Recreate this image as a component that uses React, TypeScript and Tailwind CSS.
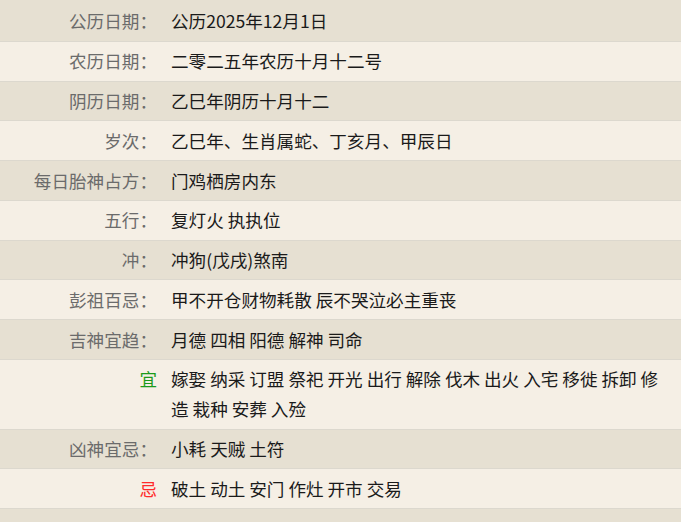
const rows: { label: string; value: string; tone?: "yi" | "ji" }[] = [
  { label: "公历日期：", value: "公历2025年12月1日" },
  { label: "农历日期：", value: "二零二五年农历十月十二号" },
  { label: "阴历日期：", value: "乙巳年阴历十月十二" },
  { label: "岁次：", value: "乙巳年、生肖属蛇、丁亥月、甲辰日" },
  { label: "每日胎神占方：", value: "门鸡栖房内东" },
  { label: "五行：", value: "复灯火 执执位" },
  { label: "冲：", value: "冲狗(戊戌)煞南" },
  { label: "彭祖百忌：", value: "甲不开仓财物耗散 辰不哭泣必主重丧" },
  { label: "吉神宜趋：", value: "月德 四相 阳德 解神 司命" },
  {
    label: "宜",
    value: "嫁娶 纳采 订盟 祭祀 开光 出行 解除 伐木 出火 入宅 移徙 拆卸 修造 栽种 安葬 入殓",
    tone: "yi",
  },
  { label: "凶神宜忌：", value: "小耗 天贼 土符" },
  { label: "忌", value: "破土 动土 安门 作灶 开市 交易", tone: "ji" },
  { label: "", value: "" },
];

export default function App() {
  return (
    <div
      className="w-[681px] h-[522px] overflow-hidden bg-[#e6e0d2] text-[17.6px] leading-[1.7]"
      style={{ fontFamily: '"Noto Sans CJK SC", "Noto Sans", sans-serif' }}
    >
      {rows.map((row, i) => (
        <Row key={i} first={i === 0} dark={i % 2 === 0} {...row} />
      ))}
    </div>
  );
}

function Row({
  label,
  value,
  tone,
  dark,
  first,
}: {
  label: string;
  value: string;
  tone?: "yi" | "ji";
  dark: boolean;
  first: boolean;
}) {
  const labelColor =
    tone === "yi" ? "text-[#1a9a1a]" : tone === "ji" ? "text-[#ff2a2a]" : "text-[#6b6b6b]";
  return (
    <div
      className={`grid grid-cols-[164px_1fr] border-b border-[#dcd8ce] ${
        dark ? "bg-[#e6e0d2]" : "bg-[#f5efe5]"
      } ${first ? "pt-[6.4px] pb-[4.4px]" : "py-[4.4px]"}`}
    >
      <div className={`text-right pr-[7px] min-h-[30px] ${labelColor}`}>{label}</div>
      <div className="pl-[7px] pr-[10px] text-[#1a1a1a]">{value}</div>
    </div>
  );
}
